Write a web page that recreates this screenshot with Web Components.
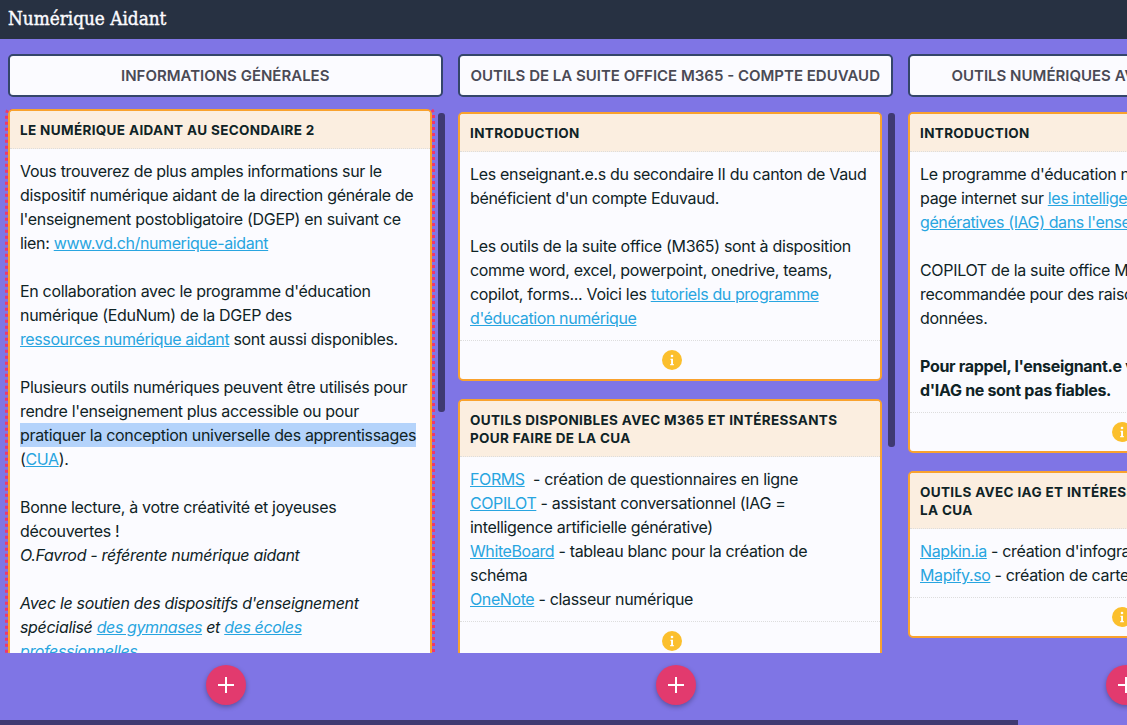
<!DOCTYPE html>
<html lang="fr">
<head>
<meta charset="utf-8">
<title>Numérique Aidant</title>
<style>
    html, body {
        margin: 0;
        height: 100%;
        overflow: hidden;
        background: #7f75e5;
        font-family: Inter, "Liberation Sans", sans-serif;
    }
    body {
        display: flex;
        flex-direction: column;
    }
    na-card a {
        color: #28a5e0;
        letter-spacing: -0.4px;
    }
    na-card mark {
        background: #b4d3fb;
        color: inherit;
        padding: 2px 0;
    }
</style>
</head>
<body>
<na-navbar>Numérique Aidant</na-navbar>
<na-board>
    <na-column heading="INFORMATIONS GÉNÉRALES" offset="0" thumb="299">
        <na-card heading="LE NUMÉRIQUE AIDANT AU SECONDAIRE 2" focused>
            Vous trouverez de plus amples informations sur le dispositif numérique aidant de la direction générale de l'enseignement postobligatoire (DGEP) en suivant ce lien: <a href="#">www.vd.ch/numerique-aidant</a><br><br>
            En collaboration avec le programme d'éducation numérique (EduNum) de la DGEP des<br><a href="#">ressources numérique aidant</a> sont aussi disponibles.<br><br>
            Plusieurs outils numériques peuvent être utilisés pour rendre l'enseignement plus accessible ou pour <mark>pratiquer la conception universelle des apprentissages</mark> (<a href="#">CUA</a>).<br><br>
            Bonne lecture, à votre créativité et joyeuses découvertes !<br>
            <em>O.Favrod - référente numérique aidant</em><br><br>
            <em>Avec le soutien des dispositifs d'enseignement spécialisé <a href="#">des gymnases</a> et <a href="#">des écoles professionnelles</a></em>
        </na-card>
    </na-column>
    <na-column heading="OUTILS DE LA SUITE OFFICE M365 - COMPTE EDUVAUD" offset="3" thumb="334">
        <na-card heading="INTRODUCTION">
            Les enseignant.e.s du secondaire II du canton de Vaud bénéficient d'un compte Eduvaud.<br><br>
            Les outils de la suite office (M365) sont à disposition comme word, excel, powerpoint, onedrive, teams, copilot, forms... Voici les <a href="#">tutoriels du programme d'éducation numérique</a>
        </na-card>
        <na-card heading="OUTILS DISPONIBLES AVEC M365 ET INTÉRESSANTS POUR FAIRE DE LA CUA">
            <a href="#">FORMS</a>&nbsp; - création de questionnaires en ligne<br>
            <a href="#">COPILOT</a> - assistant conversationnel (IAG = intelligence artificielle générative)<br>
            <a href="#">WhiteBoard</a> - tableau blanc pour la création de<br>schéma<br>
            <a href="#">OneNote</a> - classeur numérique
        </na-card>
    </na-column>
    <na-column heading="OUTILS NUMÉRIQUES AVEC IAG POUR LA CUA :" offset="3">
        <na-card heading="INTRODUCTION">
            Le programme d'éducation numérique propose une<br>page internet sur <a href="#">les intelligences artificielles<br>génératives (IAG) dans l'enseignement</a><br><br>
            COPILOT de la suite office M365 est l'IAG<br>recommandée pour des raisons de protection des<br>données.<br><br>
            <strong>Pour rappel, l'enseignant.e vérifie : les réponses<br>d'IAG ne sont pas fiables.</strong>
        </na-card>
        <na-card heading="OUTILS AVEC IAG ET INTÉRESSANTS POUR FAIRE DE&lt;br&gt;LA CUA">
            <a href="#">Napkin.ia</a> - création d'infographies<br>
            <a href="#">Mapify.so</a> - création de cartes mentales
        </na-card>
    </na-column>
</na-board>
<na-hscroll></na-hscroll>

<script>
class NaNavbar extends HTMLElement {
    constructor() {
        super()
        this.attachShadow({mode: 'open'})
    }

    connectedCallback() {
        this.shadowRoot.innerHTML = `
        <style>
            :host {
                display: flex;
                align-items: center;
                flex: none;
                height: 39px;
                padding: 0 8px;
                background: #273142;
                color: #fbfbff;
                font: 400 18.8px/1 "DejaVu Serif Condensed", "DejaVu Serif", serif;
                font-stretch: condensed;
                -webkit-text-stroke: 0.4px #fbfbff;
            }
        </style>
        <slot></slot>
        `
    }
}

class NaBoard extends HTMLElement {
    constructor() {
        super()
        this.attachShadow({mode: 'open'})
    }

    connectedCallback() {
        this.shadowRoot.innerHTML = `
        <style>
            :host {
                display: flex;
                flex: 1;
                min-height: 0;
                gap: 15.5px;
                padding: 15px 8px 0;
                overflow: hidden;
            }
        </style>
        <slot></slot>
        `
    }
}

class NaColumn extends HTMLElement {
    constructor() {
        super()
        this.attachShadow({mode: 'open'})
    }

    connectedCallback() {
        const offset = this.getAttribute('offset') || 0
        const thumb = this.getAttribute('thumb')
        this.shadowRoot.innerHTML = `
        <style>
            :host {
                display: flex;
                flex-direction: column;
                flex: none;
                width: 434.5px;
                position: relative;
            }
            .title {
                flex: none;
                box-sizing: border-box;
                height: 43px;
                margin-bottom: 12px;
                display: flex;
                align-items: center;
                justify-content: center;
                background: #fbfbff;
                border: 2px solid #34466a;
                border-radius: 5px;
                color: #4a4a55;
                font-size: 15px;
                font-weight: 600;
                white-space: nowrap;
            }
            .cards {
                flex: 1;
                min-height: 0;
                overflow: hidden;
                display: flex;
                flex-direction: column;
                gap: 18px;
                padding: ${offset}px 10px 0 8px;
                margin-left: -8px;
            }
            .thumb {
                position: absolute;
                top: 59px;
                right: -2px;
                width: 6.5px;
                border-radius: 3px;
                background: #3f3a72;
            }
            .foot {
                flex: none;
                height: 67px;
                display: flex;
                justify-content: center;
                padding: 12px 0 0 1px;
                box-sizing: border-box;
            }
        </style>
        <div class="title">${this.getAttribute('heading')}</div>
        <div class="cards"><slot></slot></div>
        ${thumb ? `<div class="thumb" style="height:${thumb}px"></div>` : ''}
        <div class="foot"><na-add-button></na-add-button></div>
        `
    }
}

class NaCard extends HTMLElement {
    constructor() {
        super()
        this.attachShadow({mode: 'open'})
    }

    connectedCallback() {
        this.shadowRoot.innerHTML = `
        <style>
            :host {
                display: block;
                flex: none;
                width: 424px;
                box-sizing: border-box;
                background: #fbfbff;
                border: 2px solid #f9a22e;
                border-radius: 5px;
                color: #0f2326;
                font-size: 16px;
                line-height: 24px;
                letter-spacing: -0.32px;
            }
            :host([focused]) {
                outline: 3px dotted #f0386b;
            }
            header {
                padding: 10px 10px 9px;
                background: #fbeee0;
                border-bottom: 1px dotted #ddd;
                border-radius: 3px 3px 0 0;
                font-size: 13.5px;
                font-weight: 700;
                line-height: 18px;
                letter-spacing: 0.35px;
            }
            .body {
                padding: 10px;
            }
            footer {
                box-sizing: border-box;
                height: 39px;
                padding-left: 4px;
                display: flex;
                align-items: center;
                justify-content: center;
                border-top: 1px dotted #ddd;
            }
        </style>
        <header>${this.getAttribute('heading')}</header>
        <div class="body"><slot></slot></div>
        <footer>
            <svg width="20" height="20" viewBox="0 0 20 20">
                <circle cx="10" cy="10" r="10" fill="#fbbf2d"/>
                <circle cx="10" cy="6" r="1.3" fill="#fff"/>
                <path d="M8.5 8.8h2.5v5.2h.8v1.2H8.2V14h.9v-4h-.6z" fill="#fff"/>
            </svg>
        </footer>
        `
    }
}

class NaAddButton extends HTMLElement {
    constructor() {
        super()
        this.attachShadow({mode: 'open'})
    }

    connectedCallback() {
        this.shadowRoot.innerHTML = `
        <style>
            :host {
                display: flex;
                align-items: center;
                justify-content: center;
                width: 40px;
                height: 40px;
                border-radius: 50%;
                background: #e23a6e;
                box-shadow: 0 2px 5px rgba(0, 0, 0, 0.3);
            }
        </style>
        <svg width="16" height="16" viewBox="0 0 16 16">
            <path d="M8 0v16M0 8h16" stroke="#fff" stroke-width="2"/>
        </svg>
        `
    }
}

class NaHscroll extends HTMLElement {
    constructor() {
        super()
        this.attachShadow({mode: 'open'})
    }

    connectedCallback() {
        this.shadowRoot.innerHTML = `
        <style>
            :host {
                display: block;
                flex: none;
                height: 5px;
            }
            div {
                width: 1018px;
                height: 5px;
                background: #3f3a72;
            }
        </style>
        <div></div>
        `
    }
}

customElements.define('na-navbar', NaNavbar)
customElements.define('na-board', NaBoard)
customElements.define('na-column', NaColumn)
customElements.define('na-card', NaCard)
customElements.define('na-add-button', NaAddButton)
customElements.define('na-hscroll', NaHscroll)
</script>
</body>
</html>
